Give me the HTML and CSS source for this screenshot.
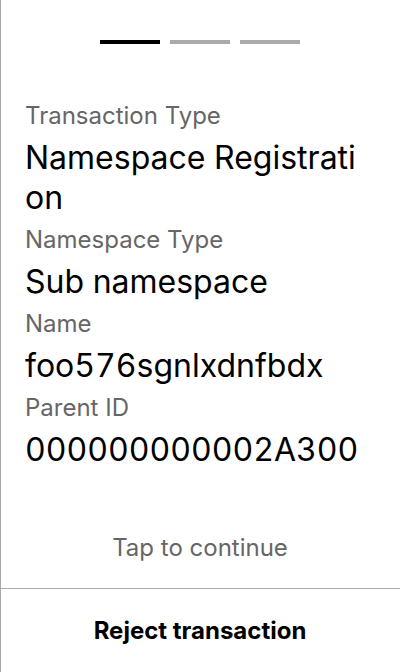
FILE: index.html
```html
<!DOCTYPE html>
<html>
<head>
<meta charset="utf-8">
<link rel="stylesheet" href="styles.css">
</head>
<body>
<div class="screen">
  <div class="progress">
    <span class="bar active"></span>
    <span class="bar"></span>
    <span class="bar"></span>
  </div>
  <div class="fields">
    <div class="label">Transaction Type</div>
    <div class="value">Namespace Registration</div>
    <div class="label">Namespace Type</div>
    <div class="value">Sub namespace</div>
    <div class="label">Name</div>
    <div class="value">foo576sgnlxdnfbdx</div>
    <div class="label">Parent ID</div>
    <div class="value">000000000002A300</div>
  </div>
  <div class="tap">Tap to continue</div>
  <div class="reject">Reject transaction</div>
</div>
</body>
</html>
```
FILE: styles.css
```css
html, body {
  margin: 0;
  padding: 0;
  background: #fff;
}
body {
  font-family: Inter, "Noto Sans", sans-serif;
  color: #000;
}
.screen {
  width: 400px;
  height: 672px;
  box-sizing: border-box;
  border-left: 1px solid #aaaaaa;
  display: flex;
  flex-direction: column;
}
.progress {
  display: flex;
  justify-content: center;
  gap: 10px;
  padding-top: 40px;
  margin-left: -1px;
}
.bar {
  width: 60px;
  height: 4px;
  background: #aaaaaa;
}
.bar.active {
  background: #000;
}
.fields {
  padding: 50px 30px 0 24px;
  display: flex;
  flex-direction: column;
}
.label {
  font-size: 24px;
  line-height: 44px;
  color: #666666;
}
.value {
  font-size: 32px;
  line-height: 40px;
  word-break: break-all;
  font-variant-numeric: tabular-nums;
}
.tap {
  margin-top: auto;
  text-align: center;
  font-size: 24px;
  line-height: 28px;
  color: #666666;
  padding-bottom: 26px;
  margin-left: -1px;
}
.reject {
  border-top: 1px solid #aaaaaa;
  height: 83px;
  display: flex;
  align-items: center;
  justify-content: center;
  font-size: 24px;
  font-weight: 700;
  margin-left: -1px;
}
```
